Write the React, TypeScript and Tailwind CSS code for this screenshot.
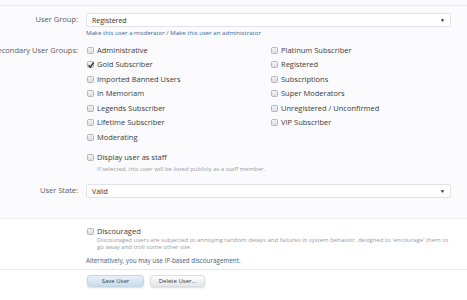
import React from "react"

const left = [
   { label: "Administrative", checked: false },
   { label: "Gold Subscriber", checked: true },
   { label: "Imported Banned Users", checked: false },
   { label: "In Memoriam", checked: false },
   { label: "Legends Subscriber", checked: false },
   { label: "Lifetime Subscriber", checked: false },
   { label: "Moderating", checked: false },
]

const right = [
   "Platinum Subscriber",
   "Registered",
   "Subscriptions",
   "Super Moderators",
   "Unregistered / Unconfirmed",
   "VIP Subscriber",
]

function Box({ checked = false }: { checked?: boolean }) {
   return (
      <span className="relative w-[7px] h-[7px] shrink-0 rounded-[1.5px] border border-[#b4b4bc] bg-gradient-to-b from-[#f4f4f6] to-[#dcdce2]">
         {checked && (
            <svg viewBox="0 0 10 10" className="absolute -left-[1px] -top-[1.5px] w-[8px] h-[8px]">
               <path d="M2 5.2 L4.2 7.6 L8.4 1.8" fill="none" stroke="#333" strokeWidth="1.8" />
            </svg>
         )}
      </span>
   )
}

function Check({ label, checked }: { label: string; checked?: boolean }) {
   return (
      <div className="flex items-center gap-[3px] h-[14.5px]">
         <Box checked={checked} />
         <span className="text-[7.5px] text-[#3a3a3a] whitespace-nowrap">{label}</span>
      </div>
   )
}

function Label({ children }: { children: React.ReactNode }) {
   return (
      <div className="w-[78px] shrink-0 flex justify-end">
         <span className="shrink-0 whitespace-nowrap text-[7.5px] text-[#5a5a5a]">{children}</span>
      </div>
   )
}

function Select({ value }: { value: string }) {
   return (
      <div className="flex-1 mr-[16px] h-[14px] flex items-center justify-between pl-[5px] pr-[5px] bg-white border border-[#e2e2ea] rounded-[2px]">
         <span className="text-[7px] text-[#333]">{value}</span>
         <span className="text-[5px] text-[#222]">▼</span>
      </div>
   )
}

export default function App() {
   return (
      <div className="w-[467px] h-[300px] overflow-hidden bg-[#fbfbfd] font-['Open_Sans',sans-serif] leading-none">
         <div className="h-[5px]" />
         <div className="border-t border-[#ececf2]" />

         {/* User Group */}
         <div className="flex items-center gap-[8px] mt-[7px]">
            <Label>User Group:</Label>
            <Select value="Registered" />
         </div>
         <div className="ml-[86px] mt-[2px] h-[9px] flex items-center text-[6.1px] text-[#3f6590] whitespace-nowrap">
            Make this user a moderator / Make this user an administrator
         </div>

         {/* Secondary groups */}
         <div className="flex gap-[8px] mt-[5px]">
            <div className="w-[78px] shrink-0 flex justify-end h-[14.5px] items-center">
               <span className="shrink-0 whitespace-nowrap text-[7.5px] text-[#5a5a5a]">Secondary User Groups:</span>
            </div>
            <div className="flex-1 pl-[1px]">
               <div className="grid grid-cols-[184px_1fr]">
                  <div>
                     {left.map((g) => (
                        <Check key={g.label} label={g.label} checked={g.checked} />
                     ))}
                  </div>
                  <div>
                     {right.map((g) => (
                        <Check key={g} label={g} />
                     ))}
                  </div>
               </div>
               <div className="mt-[6px]">
                  <Check label="Display user as staff" />
               </div>
               <div className="ml-[10px] h-[7px] flex items-center text-[6px] text-[#9a9aa2] whitespace-nowrap">
                  If selected, this user will be listed publicly as a staff member.
               </div>
            </div>
         </div>

         {/* User State */}
         <div className="flex items-center gap-[8px] mt-[12px]">
            <Label>User State:</Label>
            <Select value="Valid" />
         </div>

         <div className="h-[20px]" />
         <div className="border-t border-[#ececf2] bg-white">
            <div className="ml-[87px] pt-[5px]">
               <Check label="Discouraged" />
               <div className="ml-[10px] -mt-[2px] w-[356px] text-[6px] leading-[7.5px] text-[#9a9aa2]">
                  Discouraged users are subjected to annoying random delays and failures in system behavior, designed to 'encourage' them to go away and troll some other site.
               </div>
               <div className="-ml-[1px] mt-[6px] text-[6.3px] text-[#3f5c80] whitespace-nowrap">
                  Alternatively, you may use IP-based discouragement.
               </div>
            </div>
            <div className="mt-[5px] border-t border-[#e6e6ee]" />
            <div className="ml-[87px] mt-[5px] flex gap-[6px]">
               <button className="w-[57px] h-[12px] rounded-[3px] border border-[#c6d6e4] bg-gradient-to-b from-[#e8f1f8] to-[#c9dcec] shadow-[0_1px_2px_rgba(0,0,0,0.15)] text-[6px] text-[#2c3e50] flex items-center justify-center">
                  Save User
               </button>
               <button className="w-[55px] h-[12px] rounded-[3px] border border-[#dcdce2] bg-gradient-to-b from-[#ffffff] to-[#e6e6ea] shadow-[0_1px_2px_rgba(0,0,0,0.15)] text-[6px] text-[#333] flex items-center justify-center">
                  Delete User...
               </button>
            </div>
            <div className="h-[40px]" />
         </div>
      </div>
   )
}
